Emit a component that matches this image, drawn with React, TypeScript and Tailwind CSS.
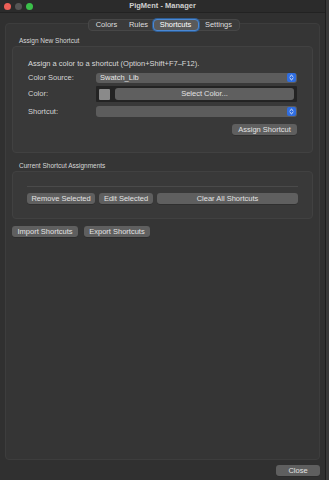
import React from 'react';

const font = { fontFamily: '"Liberation Sans", Arial, sans-serif' };

const Stepper = () => (
  <div className="w-[9px] h-[9px] rounded-[2px] bg-[#2f6de0] flex items-center justify-center mr-[1px]">
    <svg width="5" height="7" viewBox="0 0 5 7" fill="none" stroke="#e8eefc" strokeWidth="1" strokeLinecap="round" strokeLinejoin="round">
      <path d="M1 2.6 L2.5 1.2 L4 2.6" />
      <path d="M1 4.4 L2.5 5.8 L4 4.4" />
    </svg>
  </div>
);

const Button: React.FC<{ label: string; className?: string }> = ({ label, className = '' }) => (
  <div
    className={`h-[11px] rounded-[3px] bg-[#5f5f5f] text-[#e2e2e2] text-[7.5px] leading-[11px] text-center shadow-[0_0.5px_0_#262626] ${className}`}
  >
    {label}
  </div>
);

export default function App() {
  return (
    <div className="w-[329px] h-[480px] bg-[#393939] flex" style={font}>
      <div className="w-[326px] h-[480px] bg-[#303030] flex flex-col border-r border-[#1e1e1e]">
        {/* title bar */}
        <div className="h-[13px] bg-[#2b2b2b] border-b border-[#222] flex items-center relative shrink-0">
          <div className="flex gap-[4px] pl-[4px]">
            <div className="w-[7px] h-[7px] rounded-full bg-[#ed5f57]" />
            <div className="w-[7px] h-[7px] rounded-full bg-[#555555]" />
            <div className="w-[7px] h-[7px] rounded-full bg-[#3bc04a]" />
          </div>
          <div className="absolute inset-0 flex items-center justify-center text-[7.5px] font-semibold text-[#cfcfcf]">
            PigMent - Manager
          </div>
        </div>

        {/* tab panel */}
        <div className="flex-1 flex flex-col px-[5px] pt-[6px]">
          <div className="relative flex-1 flex flex-col">
            <div className="absolute left-0 right-0 top-[4px] bottom-0 rounded-[4px] bg-[#353535] border border-[#3d3d3d]" />
            <div className="relative flex justify-center">
              <div className="ml-[2px] flex h-[12px] rounded-[4px] bg-[#3b3b3b] border border-[#474747] text-[7.5px] text-[#dedede] items-center">
                <div className="w-[36px] text-center">Colors</div>
                <div className="w-[28px] text-center">Rules</div>
                <div className="w-[46px] h-[12px] -my-px rounded-[4px] bg-[#5a5a5a] border border-[#4b88d2] shadow-[0_0_0_1px_#2e5d94] text-center leading-[10px] text-white">
                  Shortcuts
                </div>
                <div className="w-[40px] text-center">Settings</div>
              </div>
            </div>

            <div className="relative flex flex-col px-[7px] pt-[6px]">
              {/* Assign New Shortcut */}
              <div className="text-[6.5px] text-[#d8d8d8] pl-[7px] leading-[8px]">Assign New Shortcut</div>
              <div className="mt-[1px] h-[107px] rounded-[4px] bg-[#393939] border border-[#414141] flex flex-col px-[15px] pt-[12px]">
                <div className="text-[7.5px] text-[#dadada] leading-[9px]">
                  Assign a color to a shortcut (Option+Shift+F7–F12).
                </div>
                <div className="mt-[4px] flex items-center h-[11px]">
                  <div className="w-[68px] text-[7.5px] text-[#d4d4d4]">Color Source:</div>
                  <div className="flex-1 h-[10px] rounded-[3px] bg-[#5c5c5c] flex items-center justify-between">
                    <span className="pl-[4px] text-[7.5px] text-[#e6e6e6]">Swatch_Lib</span>
                    <Stepper />
                  </div>
                </div>
                <div className="mt-[3px] flex items-center h-[16px]">
                  <div className="w-[68px] text-[7.5px] text-[#d4d4d4]">Color:</div>
                  <div className="flex-1 h-[16px] bg-[#232323] rounded-[1px] flex items-center px-[3px] gap-[5px]">
                    <div className="w-[11px] h-[11px] bg-[#8a8a8a] rounded-[1px]" />
                    <Button label="Select Color..." className="flex-1 h-[12px] leading-[12px]" />
                  </div>
                </div>
                <div className="mt-[4px] flex items-center h-[11px]">
                  <div className="w-[68px] text-[7.5px] text-[#d4d4d4]">Shortcut:</div>
                  <div className="flex-1 h-[11px] rounded-[3px] bg-[#5c5c5c] flex items-center justify-end">
                    <Stepper />
                  </div>
                </div>
                <div className="mt-[7px] flex justify-end">
                  <Button label="Assign Shortcut" className="w-[65px]" />
                </div>
              </div>

              {/* Current Shortcut Assignments */}
              <div className="mt-[9px] text-[6.5px] text-[#d8d8d8] pl-[7px] leading-[8px]">Current Shortcut Assignments</div>
              <div className="mt-[1px] h-[48px] rounded-[4px] bg-[#393939] border border-[#414141] flex flex-col px-[14px] pt-[14px]">
                <div className="h-px bg-[#4a4a4a]" />
                <div className="mt-[6px] flex gap-[4px]">
                  <Button label="Remove Selected" className="w-[68px]" />
                  <Button label="Edit Selected" className="w-[54px]" />
                  <Button label="Clear All Shortcuts" className="flex-1" />
                </div>
              </div>

              <div className="mt-[7px] flex gap-[6px]">
                <Button label="Import Shortcuts" className="w-[66px]" />
                <Button label="Export Shortcuts" className="w-[66px]" />
              </div>
            </div>
          </div>

          <div className="h-[20px] flex items-center justify-end shrink-0">
            <Button label="Close" className="w-[44px]" />
          </div>
        </div>
      </div>
    </div>
  );
}
